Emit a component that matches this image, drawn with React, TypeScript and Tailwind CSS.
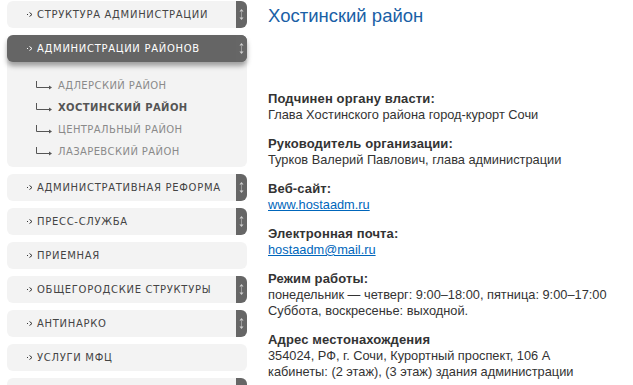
import React from "react";

const menu = [
  { title: "Структура администрации", handle: true },
  { title: "Администрации районов", handle: true, active: true },
  { title: "Административная реформа", handle: true },
  { title: "Пресс-служба", handle: true },
  { title: "Приемная", handle: false },
  { title: "Общегородские структуры", handle: true },
  { title: "Антинарко", handle: true },
  { title: "Услуги МФЦ", handle: false },
  { title: "", handle: true },
];

const districts = [
  { name: "Адлерский район" },
  { name: "Хостинский район", current: true },
  { name: "Центральный район" },
  { name: "Лазаревский район" },
];

function Bullet({ light }: { light?: boolean }) {
  const c = light ? "#ffffff" : "#333333";
  return (
    <svg width="6" height="5" viewBox="0 0 6 5" className="shrink-0">
      <rect x="0" y="2" width="1" height="1" fill={c} />
      <path d="M2.5 0.5 L5 2.5 L2.5 4.5" stroke={c} strokeWidth="1" fill="none" />
    </svg>
  );
}

function Handle() {
  return (
    <div className="flex h-full w-[11px] shrink-0 items-center justify-center rounded-r-[6px] bg-[#666666]">
      <svg width="5" height="11" viewBox="0 0 5 11">
        <path d="M2.5 0 L4.5 2.5 H0.5 Z" fill="#cfcfcf" />
        <rect x="2" y="3.5" width="1" height="1" fill="#cfcfcf" />
        <rect x="2" y="5.5" width="1" height="1" fill="#cfcfcf" />
        <rect x="2" y="7.5" width="1" height="1" fill="#cfcfcf" />
        <path d="M2.5 11 L4.5 8.5 H0.5 Z" fill="#cfcfcf" />
      </svg>
    </div>
  );
}

function SideItem({ title, handle, active }: { title: string; handle: boolean; active?: boolean }) {
  return (
    <div
      className={
        "flex h-[27px] shrink-0 items-center rounded-[6px] " +
        (active ? "relative bg-[#656565] shadow-[0_4px_5px_rgba(0,0,0,0.35)]" : "bg-[#f3f3f3]")
      }
    >
      <div className="flex flex-1 items-center gap-[4px] pl-[20px]">
        {title && <Bullet light={active} />}
        <span
          className={
            "text-[10px] uppercase tracking-[0.07em] " + (active ? "text-white" : "text-[#444444]")
          }
        >
          {title}
        </span>
      </div>
      {handle && <Handle />}
    </div>
  );
}

function Field({ label, children }: { label: string; children: React.ReactNode }) {
  return (
    <div className="mb-[13px]">
      <div className="text-[13px] font-bold leading-[16px] tracking-[0.01em] text-[#333333]">{label}</div>
      <div className="text-[12.8px] leading-[16px] text-[#333333]">{children}</div>
    </div>
  );
}

export default function App() {
  return (
    <div className="flex h-[385px] w-[633px] overflow-hidden bg-white font-['Liberation_Sans',Arial,sans-serif]">
      <aside className="flex w-[247px] shrink-0 flex-col gap-[7px] pl-[7px] pt-[1px] font-['DejaVu_Sans',sans-serif]">
        {menu.map((m, i) => (
          <React.Fragment key={i}>
            {m.active ? (
              <div className="shrink-0 rounded-[6px] bg-[#f3f3f3]">
                <SideItem title={m.title} handle={m.handle} active />
                <div className="flex flex-col gap-[7px] pb-[8px] pl-[29px] pt-[16px]">
                  {districts.map((d) => (
                    <div key={d.name} className="flex items-center gap-[5px] leading-[15px]">
                      <svg width="17" height="9" viewBox="0 0 17 9" className="shrink-0">
                        <path d="M0.5 0 V6.5 H14" stroke="#555555" strokeWidth="1" fill="none" />
                        <path d="M13 4.5 L16 6.5 L13 8.5 Z" fill="#555555" />
                      </svg>
                      <span
                        className={
                          "text-[10px] uppercase tracking-[0.04em] " +
                          (d.current ? "font-bold text-[#555555]" : "text-[#8a8a8a]")
                        }
                      >
                        {d.name}
                      </span>
                    </div>
                  ))}
                </div>
              </div>
            ) : (
              <SideItem title={m.title} handle={m.handle} />
            )}
          </React.Fragment>
        ))}
      </aside>
      <main className="flex-1 pl-[21px] pt-[4px]">
        <h1 className="text-[18.5px] leading-[24px] text-[#1a5fa6]">Хостинский район</h1>
        <div className="pt-[63px]">
          <Field label="Подчинен органу власти:">Глава Хостинского района город-курорт Сочи</Field>
          <Field label="Руководитель организации:">Турков Валерий Павлович, глава администрации</Field>
          <Field label="Веб-сайт:">
            <a href="#" className="text-[#0066bb] underline">www.hostaadm.ru</a>
          </Field>
          <Field label="Электронная почта:">
            <a href="#" className="text-[#0066bb] underline">hostaadm@mail.ru</a>
          </Field>
          <Field label="Режим работы:">
            понедельник — четверг: 9:00–18:00, пятница: 9:00–17:00
            <br />
            Суббота, воскресенье: выходной.
          </Field>
          <Field label="Адрес местонахождения">
            354024, РФ, г. Сочи, Курортный проспект, 106 А
            <br />
            кабинеты: (2 этаж), (3 этаж) здания администрации
          </Field>
        </div>
      </main>
    </div>
  );
}
